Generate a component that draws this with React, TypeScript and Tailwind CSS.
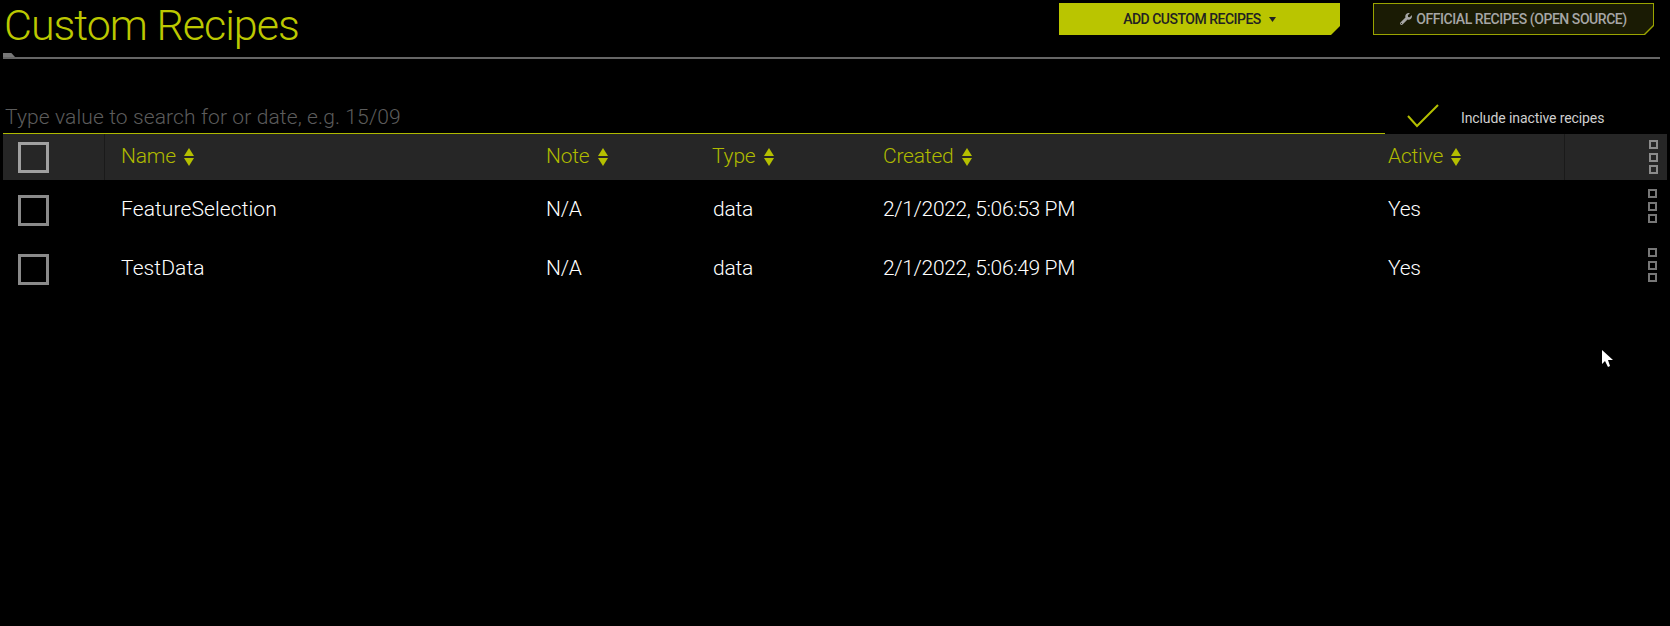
import { FaWrench } from 'react-icons/fa';

const font = "font-['Roboto','Liberation_Sans',sans-serif]";

const rows = [
  { name: 'FeatureSelection', note: 'N/A', type: 'data', created: '2/1/2022, 5:06:53 PM', active: 'Yes' },
  { name: 'TestData', note: 'N/A', type: 'data', created: '2/1/2022, 5:06:49 PM', active: 'Yes' },
];

const gridCols = 'grid grid-cols-[102px_424px_167px_170px_505px_193px_103px]';

const SortIcon = () => (
  <svg width="10" height="20" viewBox="0 0 10 20" className="ml-2 shrink-0 fill-[#b4bf00]">
    <polygon points="5,1 10,9 0,9" />
    <polygon points="0,11 10,11 5,19" />
  </svg>
);

const Checkbox = ({ color }: { color: string }) => (
  <div className={`ml-[15px] h-[31px] w-[31px] border-[3px] ${color}`} />
);

const Kebab = ({ color }: { color: string }) => (
  <div className="ml-[84px] flex flex-col gap-[3px]">
    <div className={`mb-px h-[9px] w-[9px] border-2 ${color}`} />
    <div className={`h-[9px] w-[9px] border-2 ${color}`} />
    <div className={`h-[9px] w-[9px] border-2 ${color}`} />
  </div>
);

const HeaderCell = ({ label, pad = 'pl-[17px]' }: { label: string; pad?: string }) => (
  <div className={`flex items-center text-[21px] font-light tracking-[-0.2px] text-[#afba00] ${pad}`}>
    {label}
    <SortIcon />
  </div>
);

const BodyCell = ({ children, tracking }: { children: string; tracking: string }) => (
  <div className={`flex items-center pl-[17px] text-[21px] font-light text-white ${tracking}`}>{children}</div>
);

export default function App() {
  return (
    <div className={`relative h-[626px] w-full overflow-hidden bg-black ${font}`}>
      {/* Title bar */}
      <div className="flex h-[53px] items-start justify-between">
        <h1 className="ml-[4px] text-[43px] leading-[50px] font-light tracking-[-1px] text-[#bcc800]">Custom Recipes</h1>
        <div className="mt-[3px] mr-[16px] flex gap-[33px]">
          <button className="flex h-[32px] w-[281px] items-center justify-center gap-2 bg-[#bac500] text-[14px] font-medium tracking-[-0.5px] text-[#222] [clip-path:polygon(0_0,100%_0,100%_calc(100%-9px),calc(100%-9px)_100%,0_100%)]">
            ADD CUSTOM RECIPES
            <svg width="7" height="5" viewBox="0 0 7 5" className="fill-[#222]">
              <polygon points="0,0 7,0 3.5,5" />
            </svg>
          </button>
          <button className="relative flex h-[32px] w-[281px] items-center justify-center gap-1 bg-[#9aa400] text-[14px] font-medium tracking-[-0.45px] text-[#a6a6a6] [clip-path:polygon(0_0,100%_0,100%_calc(100%-9px),calc(100%-9px)_100%,0_100%)]">
            <span className="absolute inset-px bg-[#1a1b04] [clip-path:polygon(0_0,100%_0,100%_calc(100%-9px),calc(100%-9px)_100%,0_100%)]" />
            <FaWrench className="relative text-[12px]" />
            <span className="relative">OFFICIAL RECIPES (OPEN SOURCE)</span>
          </button>
        </div>
      </div>

      {/* Rule */}
      <div className="ml-[3px] mr-[10px]">
        <div className="h-[4px] w-[12px] bg-[#777] [clip-path:polygon(0_0,70%_0,100%_100%,0_100%)]" />
        <div className="h-[2px] bg-[#666]" />
      </div>

      {/* Search */}
      <div className="mt-[39px] flex h-[36px] pl-[3px]">
        <div className="w-[1382px] border-b border-[#afba00]">
          <input
            placeholder="Type value to search for or date, e.g. 15/09"
            className="mt-px h-[35px] w-full bg-transparent pl-[2px] text-[21px] font-light tracking-[0.12px] text-white outline-none placeholder:text-[#5c5c5c]"
          />
        </div>
        <div className="flex items-start">
          <svg width="34" height="25" viewBox="0 0 34 25" className="mt-[6px] ml-[21px] fill-none stroke-[#b4bf00] stroke-2">
            <polyline points="2,12 11,22 32,1" />
          </svg>
          <span className="mt-[10px] ml-[21px] text-[14px] tracking-[-0.1px] text-[#cfcfcf]">Include inactive recipes</span>
        </div>
      </div>

      {/* Table */}
      <div className="ml-[3px] mr-[3px]">
        <div className={`${gridCols} h-[46px] bg-[#262626]`}>
          <div className="flex items-center border-r border-[#1a1a1a]">
            <Checkbox color="border-[#a0a0a0]" />
          </div>
          <HeaderCell label="Name" pad="pl-[16px]" />
          <HeaderCell label="Note" />
          <HeaderCell label="Type" pad="pl-[16px]" />
          <HeaderCell label="Created" />
          <HeaderCell label="Active" />
          <div className="flex items-center border-l border-[#1a1a1a]">
            <Kebab color="border-[#8c8c8c]" />
          </div>
        </div>
        {rows.map((row) => (
          <div key={row.name} className={`${gridCols} h-[59px]`}>
            <div className="flex items-center pt-[2px]">
              <Checkbox color="border-[#8a8a8a]" />
            </div>
            <BodyCell tracking="-ml-px tracking-[0.1px]">{row.name}</BodyCell>
            <BodyCell tracking="tracking-[-0.2px]">{row.note}</BodyCell>
            <BodyCell tracking="tracking-[-0.2px]">{row.type}</BodyCell>
            <BodyCell tracking="tracking-[-0.35px]">{row.created}</BodyCell>
            <BodyCell tracking="tracking-[-0.2px]">{row.active}</BodyCell>
            <div className="flex items-start pt-[9px]">
              <Kebab color="border-[#777]" />
            </div>
          </div>
        ))}
      </div>

      {/* Mouse pointer */}
      <svg width="12" height="18" viewBox="0 0 12 18" className="absolute top-[350px] left-[1602px] fill-white">
        <polygon points="0,0 0,14 3,11 6,17 8,16 6,10 11,10" />
      </svg>
    </div>
  );
}
